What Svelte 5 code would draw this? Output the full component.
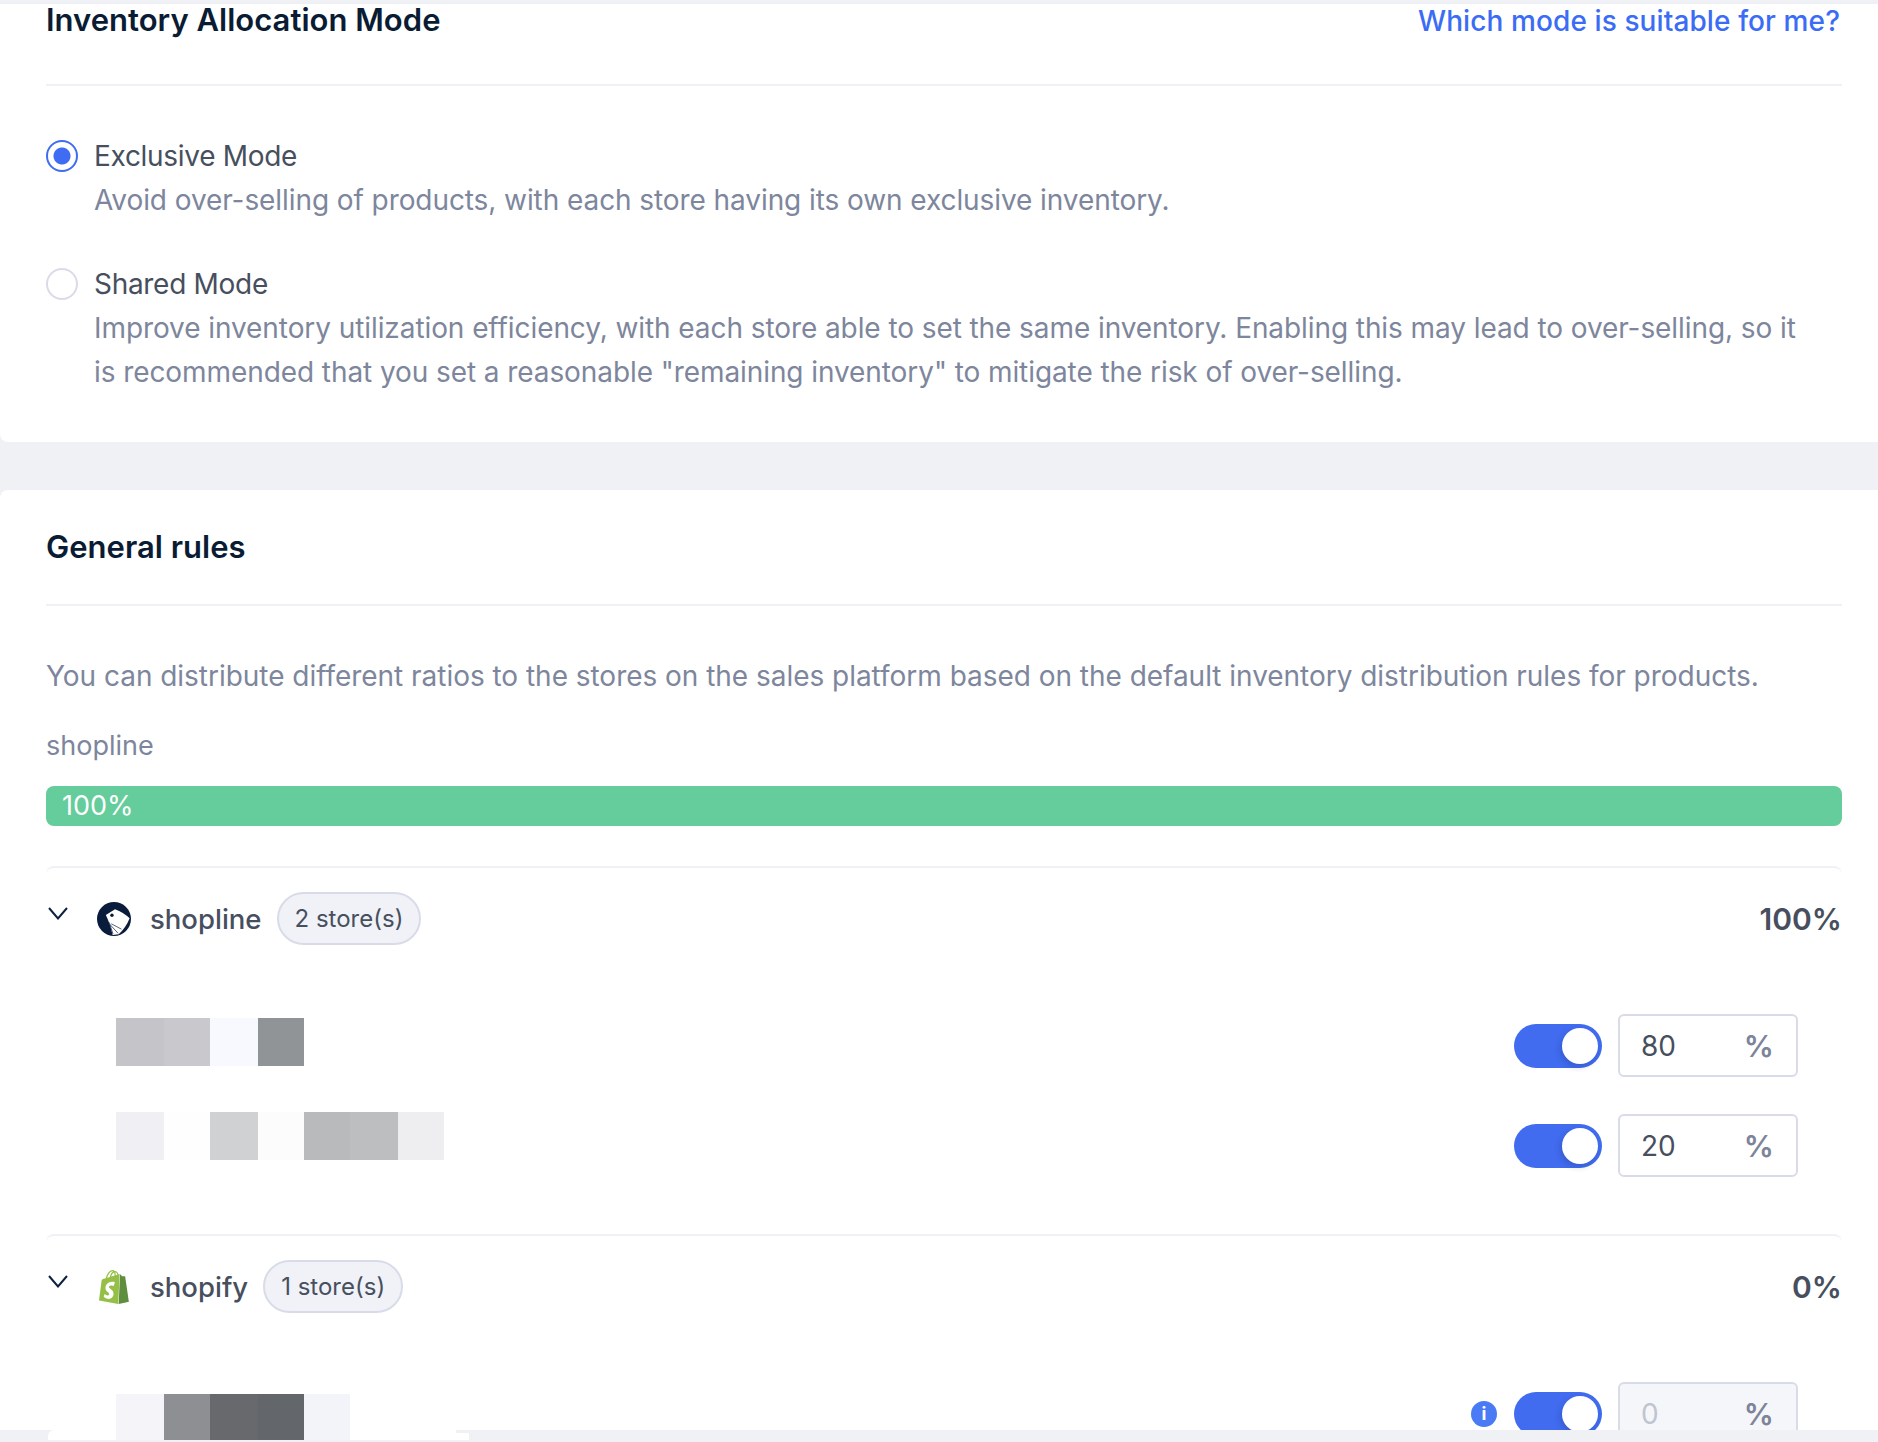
<script>
  const shoplineStores = [
    {
      offset: 4,
      value: '80',
      cells: [[48, '#c5c5c9'], [46, '#c9c9cd'], [48, '#f8f9fe'], [46, '#919496']]
    },
    {
      offset: -2,
      value: '20',
      cells: [[48, '#f0f0f4'], [46, '#fefefe'], [48, '#d0d1d3'], [46, '#fcfcfc'], [46, '#b9babc'], [48, '#bdbebf'], [46, '#eeeef0']]
    }
  ]
  const shopifyCells = [[48, '#f4f4f9'], [46, '#8e8f93'], [48, '#67696d'], [46, '#63666a'], [46, '#f3f4f9']]
</script>

{#snippet mosaic(cells, offset)}
  <div class="mosaic" style="margin-top: {offset}px">
    {#each cells as [width, color]}
      <span style="width: {width}px; background: {color}"></span>
    {/each}
  </div>
{/snippet}

{#snippet chevron()}
  <svg class="chevron" viewBox="0 0 20 13" width="20" height="13">
    <path d="M1 1l9 10.5L19 1" fill="none" stroke="#0d2240" stroke-width="2" />
  </svg>
{/snippet}

{#snippet controls(value, disabled)}
  <div class="controls">
    {#if disabled}
      <span class="info">i</span>
    {/if}
    <span class="toggle"><span class="knob"></span></span>
    <div class="percent-input" class:disabled>
      <span class="value">{value}</span>
      <span class="unit">%</span>
    </div>
  </div>
{/snippet}

<div class="page">
  <div class="topline"></div>
  <section class="card first">
    <header class="head">
      <h2>Inventory Allocation Mode</h2>
      <a href="#mode">Which mode is suitable for me?</a>
    </header>
    <div class="options">
      <div class="option">
        <span class="radio checked"></span>
        <div>
          <div class="label">Exclusive Mode</div>
          <p>Avoid over-selling of products, with each store having its own exclusive inventory.</p>
        </div>
      </div>
      <div class="option">
        <span class="radio"></span>
        <div>
          <div class="label">Shared Mode</div>
          <p>Improve inventory utilization efficiency, with each store able to set the same inventory. Enabling this may lead to over-selling, so it is recommended that you set a reasonable "remaining inventory" to mitigate the risk of over-selling.</p>
        </div>
      </div>
    </div>
  </section>

  <section class="card second">
    <header class="head rules-head">
      <h2>General rules</h2>
    </header>
    <p class="intro">You can distribute different ratios to the stores on the sales platform based on the default inventory distribution rules for products.</p>
    <div class="bar-label">shopline</div>
    <div class="bar">100%</div>

    <div class="platform">
      <div class="platform-head">
        {@render chevron()}
        <svg class="logo" viewBox="0 0 100 100" width="34" height="34">
          <circle cx="50" cy="50" r="50" fill="#0a1c3c" />
          <path d="M26 38L53 21Q78 30 96 48Q86 74 64 95L46 97Q38 62 26 38z" fill="#fff" />
          <circle cx="44" cy="39" r="5" fill="#0a1c3c" />
          <path d="M38 66L62 92M36 60L47 94M42 64L72 80" stroke="#0a1c3c" stroke-width="2" fill="none" />
        </svg>
        <span class="name">shopline</span>
        <span class="pill">2 store(s)</span>
        <strong>100%</strong>
      </div>
      <div class="stores">
        {#each shoplineStores as store}
          <div class="store">
            {@render mosaic(store.cells, store.offset)}
            {@render controls(store.value, false)}
          </div>
        {/each}
      </div>
    </div>

    <div class="platform">
      <div class="platform-head">
        {@render chevron()}
        <svg class="logo" viewBox="0 0 24 24" width="34" height="34">
          <path d="M15.337 23.979l7.216-1.561s-2.604-17.613-2.625-17.73c-.018-.116-.114-.192-.211-.192s-1.929-.136-1.929-.136-1.275-1.274-1.439-1.411c-.045-.037-.075-.057-.121-.074l-.914 21.104h.023z" fill="#5e8e3e" />
          <path d="M11.71 11.305s-.81-.424-1.774-.424c-1.447 0-1.504.906-1.504 1.141 0 1.232 3.24 1.715 3.24 4.629 0 2.295-1.44 3.76-3.406 3.76-2.354 0-3.54-1.465-3.54-1.465l.646-2.086s1.245 1.066 2.28 1.066c.675 0 .975-.545.975-.932 0-1.619-2.654-1.694-2.654-4.359-.034-2.237 1.571-4.416 4.827-4.416 1.257 0 1.875.361 1.875.361l-.945 2.715-.02.01zM11.17.83c.136 0 .271.038.405.135-.984.465-2.064 1.639-2.508 3.992-.656.213-1.293.405-1.889.578C7.697 3.75 8.951.84 11.17.83zm1.235 2.949v.135c-.754.232-1.583.484-2.394.736.466-1.777 1.333-2.645 2.085-2.971.193.501.309 1.176.309 2.1zm.539-2.234c.694.074 1.141.867 1.429 1.755-.349.114-.735.231-1.158.366v-.252c0-.752-.096-1.371-.271-1.871v.002zm2.992 1.289c-.02 0-.06.021-.078.021s-.289.075-.714.21c-.423-1.233-1.176-2.37-2.508-2.37h-.115C12.135.209 11.669 0 11.265 0 8.159 0 6.675 3.877 6.21 5.846c-1.194.365-2.063.636-2.16.674-.675.213-.694.232-.772.87-.075.462-1.83 14.063-1.83 14.063L15.009 24l.927-21.166z" fill="#95bf47" />
        </svg>
        <span class="name">shopify</span>
        <span class="pill">1 store(s)</span>
        <strong>0%</strong>
      </div>
      <div class="stores">
        <div class="store">
          <div class="front">{@render mosaic(shopifyCells, 12)}</div>
          {@render controls('0', true)}
        </div>
      </div>
    </div>
  </section>

  <div class="footer">
    <span class="footer-white"></span>
    <span class="footer-step"></span>
  </div>
</div>

<style>
  :global(body) {
    background: #f0f1f5;
  }
  .page {
    position: relative;
    height: 1442px;
    overflow: hidden;
    font-family: Inter, "Noto Sans", sans-serif;
    font-size: 28px;
    line-height: 44px;
    color: #7d869c;
    background: #f0f1f5;
  }
  .topline {
    height: 2px;
    margin-top: 2px;
    background: #eef0f5;
  }
  .card {
    background: #fff;
    padding-left: 46px;
    padding-right: 36px;
  }
  .card.first {
    padding-bottom: 48px;
    border-radius: 0 0 0 8px;
  }
  .card.second {
    margin-top: 48px;
    height: 952px;
    border-radius: 8px 0 0 0;
  }
  .head {
    display: flex;
    align-items: center;
    justify-content: space-between;
    height: 82px;
    padding-bottom: 46px;
    box-sizing: border-box;
    border-bottom: 2px solid #f0f1f5;
  }
  h2 {
    margin: 0;
    font-size: 31px;
    line-height: 36px;
    font-weight: 600;
    color: #0a1c33;
    letter-spacing: 0.02px;
  }
  .head h2 {
    margin-top: -2px;
  }
  .head a {
    font-size: 28px;
    font-weight: 500;
    color: #3b6cf5;
    text-decoration: none;
    padding-right: 2px;
    letter-spacing: 0.1px;
  }
  .options {
    display: flex;
    flex-direction: column;
    gap: 40px;
    margin-top: 48px;
  }
  .option {
    display: flex;
    gap: 16px;
  }
  .option p {
    max-width: 1720px;
    letter-spacing: -0.08px;
  }
  .radio {
    flex: none;
    width: 32px;
    height: 32px;
    margin-top: 6px;
    box-sizing: border-box;
    border: 2px solid #d9dce8;
    border-radius: 50%;
  }
  .radio.checked {
    border-color: #3f6cf3;
    background: radial-gradient(circle, #3f6cf3 0 8px, #fff 9px);
  }
  .label {
    color: #474f5e;
    letter-spacing: -0.3px;
  }
  p {
    margin: 0;
  }
  .rules-head {
    height: 116px;
    padding: 0;
  }
  .rules-head h2 {
    margin-top: 0;
  }
  .intro {
    margin-top: 48px;
    letter-spacing: -0.03px;
  }
  .bar-label {
    margin-top: 26px;
    font-size: 27px;
  }
  .bar {
    height: 40px;
    margin-top: 18px;
    padding-left: 16px;
    font-size: 27px;
    line-height: 40px;
    color: #fff;
    background: #65cc9b;
    border-radius: 8px;
  }
  .platform {
    padding-top: 24px;
    padding-bottom: 57px;
    border-top: 2px solid #f0f1f5;
    border-radius: 8px 8px 0 0;
  }
  .bar + .platform {
    margin-top: 40px;
  }
  .platform-head {
    display: flex;
    align-items: center;
    height: 53px;
    color: #474f5e;
  }
  .chevron {
    margin-left: 2px;
    margin-top: -10px;
  }
  .logo {
    margin-left: 29px;
  }
  .name {
    margin-left: 19px;
    font-size: 27.5px;
    font-weight: 500;
  }
  .pill {
    margin-left: 15px;
    height: 53px;
    padding: 0 16px;
    box-sizing: border-box;
    font-size: 24px;
    line-height: 49px;
    background: #f0f2f8;
    border: 2px solid #d9dce8;
    border-radius: 27px;
  }
  .platform-head strong {
    margin-left: auto;
    font-size: 30px;
    font-weight: 600;
  }
  .stores {
    display: flex;
    flex-direction: column;
    gap: 37px;
    margin-top: 69px;
  }
  .store {
    display: flex;
    align-items: flex-start;
    justify-content: space-between;
    padding-left: 70px;
    padding-right: 44px;
  }
  .mosaic {
    display: flex;
    height: 48px;
  }
  .mosaic span {
    display: block;
  }
  .front {
    position: relative;
    z-index: 2;
    height: 58px;
  }
  .front .mosaic {
    height: 46px;
  }
  .controls {
    display: flex;
    align-items: center;
    height: 63px;
  }
  .info {
    width: 26px;
    height: 26px;
    margin-right: 17px;
    border-radius: 50%;
    background: #4a7bf5;
    color: #fff;
    font-size: 18px;
    font-weight: 700;
    line-height: 26px;
    text-align: center;
  }
  .toggle {
    display: block;
    width: 88px;
    height: 44px;
    padding: 4px;
    box-sizing: border-box;
    background: #416cf0;
    border-radius: 22px;
  }
  .knob {
    display: block;
    width: 36px;
    height: 36px;
    margin-left: 44px;
    background: #fff;
    border-radius: 50%;
    box-shadow: -2px 3px 6px rgba(15, 30, 80, 0.2);
  }
  .percent-input {
    display: flex;
    align-items: center;
    justify-content: space-between;
    width: 180px;
    height: 63px;
    margin-left: 16px;
    padding: 0 22px 0 21px;
    box-sizing: border-box;
    border: 2px solid #d9dce8;
    border-radius: 6px;
    color: #474f5e;
  }
  .percent-input.disabled {
    background: #f5f6fa;
    color: #c0c4d0;
  }
  .unit {
    color: #7d8499;
    font-size: 30px;
    font-weight: 600;
  }
  .footer {
    position: absolute;
    left: 0;
    right: 0;
    bottom: 0;
    z-index: 1;
    height: 12px;
    background: #f0f1f5;
  }
  .footer-white {
    position: absolute;
    left: 48px;
    top: 0;
    width: 408px;
    height: 10px;
    background: #fff;
    border-radius: 6px 0 0 0;
  }
  .footer-step {
    position: absolute;
    left: 456px;
    top: 3px;
    width: 13px;
    height: 7px;
    background: #fff;
  }
</style>
